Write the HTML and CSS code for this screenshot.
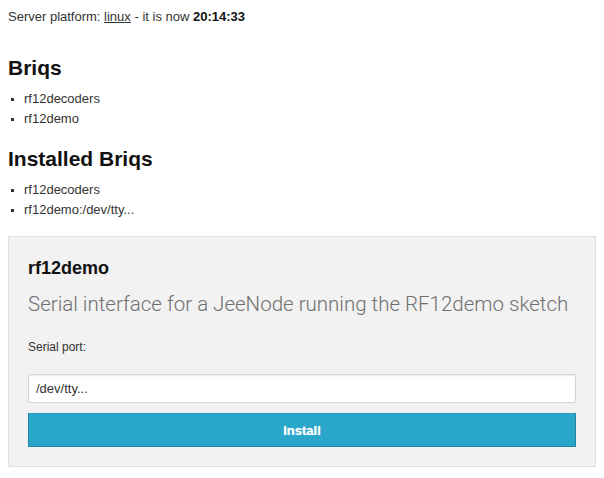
FILE: index.html
```html
<!DOCTYPE html>
<html>
<head>
<meta charset="utf-8">
<link rel="stylesheet" href="styles.css">
</head>
<body>
<p class="status">Server platform: <a href="#" class="link">linux</a> - it is now <b>20:14:33</b></p>
<h2 class="title first">Briqs</h2>
<ul class="list">
  <li>rf12decoders</li>
  <li>rf12demo</li>
</ul>
<h2 class="title">Installed Briqs</h2>
<ul class="list">
  <li>rf12decoders</li>
  <li>rf12demo:/dev/tty...</li>
</ul>
<div class="panel">
  <h3 class="panel-title">rf12demo</h3>
  <p class="subtitle">Serial interface for a JeeNode running the RF12demo sketch</p>
  <label class="label">Serial port:</label>
  <input class="field" type="text" value="/dev/tty...">
  <button class="button">Install</button>
</div>
</body>
</html>
```
FILE: styles.css
```css
html, body {
  background: #fff;
}
body {
  margin: 8px;
  font-family: "Liberation Sans", Arial, sans-serif;
  color: #222;
}
.status {
  margin: 0;
  font-size: 13px;
  line-height: 18px;
  color: #333;
}
.link {
  color: #333;
  text-decoration: underline;
}
.status b {
  color: #111;
}
.title {
  margin: 8px 0 8px;
  font-size: 21px;
  line-height: 26px;
  font-weight: bold;
  color: #111;
}
.title.first {
  margin-top: 29px;
}
.title:not(.first) {
  margin-top: 17px;
}
.list {
  margin: 0;
  padding: 0 0 0 16px;
  list-style: square;
  font-size: 13px;
  line-height: 20px;
  color: #333;
}
.list li::marker {
  font-size: 10px;
}
.panel {
  margin-top: 16px;
  background: #f2f2f2;
  border: 1px solid #e0e0e0;
  padding: 20px 19px 19px;
  display: flex;
  flex-direction: column;
}
.panel-title {
  margin: 0;
  font-size: 18px;
  line-height: 22px;
  font-weight: bold;
  color: #111;
}
.subtitle {
  margin: 12px 0 0;
  font-family: Roboto, "Liberation Sans", sans-serif;
  font-weight: 300;
  font-size: 20.5px;
  line-height: 26px;
  color: #6f6f6f;
}
.label {
  margin-top: 22px;
  font-size: 12px;
  line-height: 16px;
  color: #333;
}
.field {
  margin-top: 19px;
  box-sizing: border-box;
  height: 29px;
  border: 1px solid #d4d4d4;
  border-radius: 2px;
  background: #fff;
  padding: 0 7px;
  font-family: "Liberation Sans", Arial, sans-serif;
  font-size: 13px;
  color: #333;
  box-shadow: inset 0 1px 2px rgba(0,0,0,0.08);
}
.button {
  margin-top: 10px;
  box-sizing: border-box;
  height: 34px;
  background: #2aa6cb;
  border: 1px solid #2284a1;
  border-top-color: #2a9ac0;
  color: #fff;
  font-family: "Liberation Sans", Arial, sans-serif;
  font-size: 13px;
  font-weight: bold;
  text-shadow: 0 0 1px rgba(255,255,255,0.6);
}
```
